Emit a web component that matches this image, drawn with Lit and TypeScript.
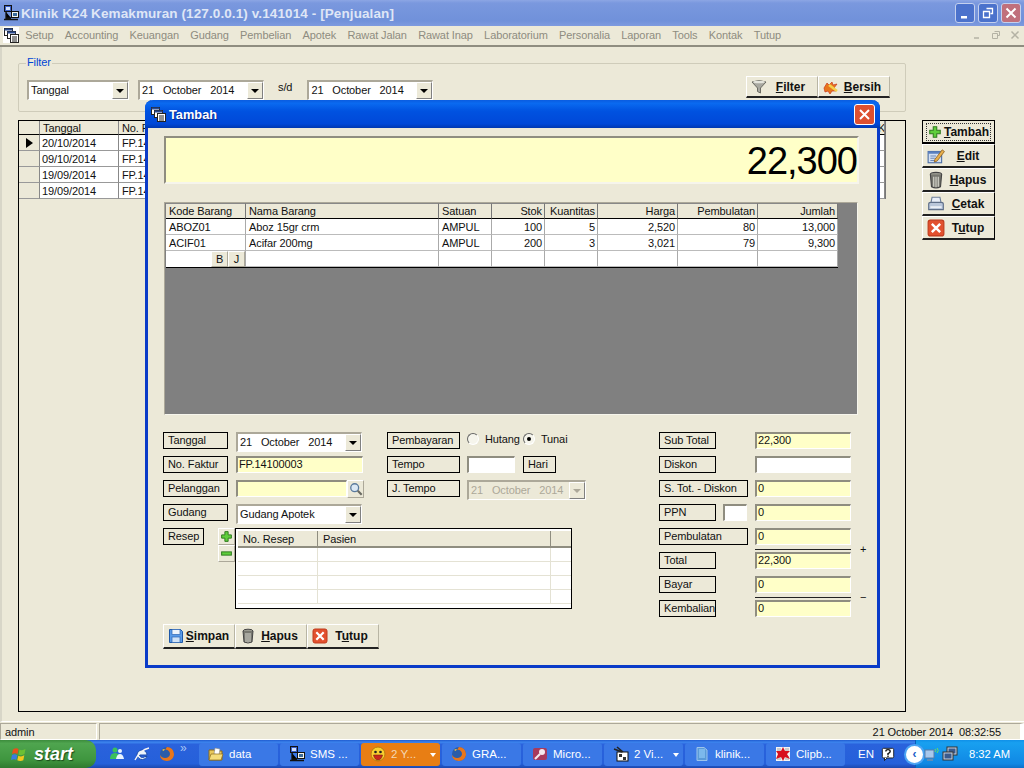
import { LitElement, html, css, svg, TemplateResult } from "lit";
import { customElement } from "lit/decorators.js";

const ic = (w: number, h: number, body: any, vb = "0 0 16 16"): TemplateResult =>
  html`<svg class="ic" width=${w} height=${h} viewBox=${vb}>${body}</svg>`;

const plusBody = svg`<path d="M6 2h4v4h4v4h-4v4H6v-4H2V6h4z" fill="#5fce3c" stroke="#2f7a1f" stroke-width="1.2"/>`;
const minusBody = svg`<rect x="2" y="6" width="12" height="4" fill="#5fce3c" stroke="#2f7a1f" stroke-width="1.2"/>`;
const xBody = svg`<rect x="1" y="1" width="14" height="14" rx="2" fill="#e2502e" stroke="#c03a1c"/><path d="M4.3 4.3l7.4 7.4M11.7 4.3l-7.4 7.4" stroke="#fff" stroke-width="2.2"/>`;
const trashBody = svg`<ellipse cx="8" cy="3" rx="5" ry="1.8" fill="#9a9a90" stroke="#444"/><path d="M3 3l1 11q4 2 8 0l1-11" fill="#77776f" stroke="#444"/><path d="M6 5v9M8 5v9.500M10 5v9" stroke="#d8d8d0" stroke-width="1"/>`;
const printerBody = svg`<path d="M4.500 2h7l1 5h-9z" fill="#e8eef8" stroke="#6d7f9a"/><path d="M1.500 8q0-1.500 2-1.500h9q2 0 2 1.500v5h-13z" fill="#b9c6da" stroke="#5e6e88"/><rect x="3" y="10" width="10" height="1.500" fill="#eef2f8"/>`;
const editBody = svg`<rect x="1" y="4" width="12" height="10" fill="#d4e0f2" stroke="#4d6ea6"/><rect x="1" y="4" width="12" height="2" fill="#5a80c0"/><path d="M3 8h5M3 10h4M3 12h5" stroke="#6d88b8"/><path d="M7 11l6.500-8.500 2 1.500L9 12.500l-2.500.8z" fill="#e8b04c" stroke="#8a5a1c" stroke-width=".7"/>`;
const floppyBody = svg`<path d="M1.500 1.500h11l2 2v11h-13z" fill="#5b9be8" stroke="#1f58a8"/><rect x="4" y="1.500" width="8" height="5" fill="#eef4fc" stroke="#2a64b4" stroke-width=".7"/><rect x="4" y="9" width="8" height="5.500" fill="#cfe2f8" stroke="#2a64b4" stroke-width=".7"/>`;
const funnelBody = svg`<path d="M1 3q7-3 14 0L9.500 9v5l-3-1.500V9z" fill="#a8a8a0" stroke="#6a6a62"/><ellipse cx="8" cy="3" rx="6" ry="1.300" fill="#e4e4dc"/>`;
const broomBody = svg`<path d="M1 9l3-5 2 2 3-3 1 3 4-1-3 4 2 3-4 0-2 3-2-3-3 1z" fill="#e8761c" stroke="#c8381c" stroke-width=".7"/><path d="M6 6l8 6" stroke="#f4d24c" stroke-width="2.400"/>`;
const lensBody = svg`<circle cx="6.500" cy="6.500" r="4.500" fill="#dbe8f4" stroke="#5a7a9c" stroke-width="1.500"/><path d="M10 10l4.500 4.500" stroke="#6a6a62" stroke-width="2.400"/>`;
const mdiBody = svg`<rect x="1.500" y="1.500" width="8" height="7" fill="#fff" stroke="#222"/><rect x="1.500" y="1.500" width="8" height="2" fill="#2a4a90"/><rect x="4.500" y="4.500" width="8" height="7" fill="#fff" stroke="#222"/><rect x="4.500" y="4.500" width="8" height="2" fill="#2a4a90"/><rect x="7.500" y="7.500" width="8" height="8" fill="#fff" stroke="#222"/><path d="M9 10h5M9 12h5M9 14h5" stroke="#222"/>`;
const pcBody = svg`<rect x="1.500" y=".5" width="7" height="6" fill="#3a5ec8" stroke="#111"/><rect x="3" y="2" width="4" height="3" fill="#cfe0ff"/><rect x="8.500" y="6.500" width="7" height="6" fill="#f4f4f0" stroke="#111"/><rect x="10" y="8" width="4" height="3" fill="#3a6a9c"/><path d="M3 7v6h5M1 14.500h14" stroke="#111" stroke-width="1.300"/>`;
const firefoxBody = svg`<circle cx="8" cy="8" r="7" fill="#2a5ca8"/><path d="M8 1a7 7 0 0 1 7 7c0 4-3 7-7 7-4 0-7-3-7-6 1 2 3 3 5 3 3 0 5-2 5-4 0-3-3-5-5-4 1-1 1-2 2-3z" fill="#e8761c"/><path d="M3 4q1-1 3-1-1 1-1 2z" fill="#f4c43c"/>`;
const folderBody = svg`<path d="M1 4h5l1 1h7v9H1z" fill="#e8c85c" stroke="#8a6a1c"/><path d="M7 2l5 1-1 6-5-1z" fill="#fff" stroke="#888" stroke-width=".6"/><path d="M1 14l2-6h12l-2 6z" fill="#f4dc7c" stroke="#8a6a1c" stroke-width=".7"/>`;
const smileBody = svg`<circle cx="8" cy="8" r="7" fill="#f8d030" stroke="#b87a10"/><circle cx="5.500" cy="6" r="1.300" fill="#222"/><circle cx="10.500" cy="6" r="1.300" fill="#222"/><path d="M3.500 9h9q-1 5-4.500 5T3.500 9z" fill="#c8281c" stroke="#7a1c10" stroke-width=".6"/>`;
const keyBody = svg`<rect x="1" y="2" width="14" height="12" rx="2" fill="#a83a5c"/><circle cx="10" cy="6" r="3" fill="#f4e8ec"/><path d="M8 8l-5 5" stroke="#f4e8ec" stroke-width="2.200"/>`;
const videoBody = svg`<rect x="4" y="6" width="11" height="9" fill="#fff" stroke="#111"/><path d="M1 3l8 3M4 1l6 5" stroke="#222" stroke-width="1.600"/><rect x="6" y="8" width="3" height="3" fill="#333"/><rect x="10" y="11" width="3" height="3" fill="#333"/>`;
const noteBody = svg`<path d="M3 1.500h7l3 2.500v10.500H3z" fill="#5a9ad8" stroke="#9cc4ec"/><rect x="5" y="3" width="6" height="9" fill="#7cb8ec"/>`;
const clipBody = svg`<rect x="1" y="1" width="14" height="14" fill="#f4f4f4"/><path d="M2 2h4v4H2zM10 2h4v4h-4zM2 10h4v4H2zM10 10h4v4h-4z" fill="#ccc"/><path d="M8 1l2 4 5 0-3 3 3 5-5-2-2 4-2-4-5 2 2-5-2-3 5 0z" fill="#d8101c"/>`;
const flagBody = svg`<path d="M2 3.500q3-2 5.500-.5L6.500 8Q4 6.500 1 8z" fill="#e8501c"/><path d="M8.500 3.500q2.500 1.500 6-.5l-1 5q-3 2-6 .5z" fill="#6cc034"/><path d="M1 9q3-1.500 5.300.2l-1 4.800Q3 12.500 0 14z" fill="#3a7ce0"/><path d="M7.300 9.800q3 1.500 6-.5l-1 5q-3 1.500-6 0z" fill="#f4c81c"/>`;
const helpBody = svg`<rect x="1.500" y="1.500" width="13" height="11" rx="1.500" fill="#fff" stroke="#111"/><path d="M4 12.500v3l3-3" fill="#fff" stroke="#111"/><path d="M5.500 5q0-2 2.500-2t2.500 2q0 1.500-2.500 2.500V9" fill="none" stroke="#111" stroke-width="1.600"/><rect x="7.200" y="9.800" width="1.600" height="1.600" fill="#111"/>`;
const wifiBody = svg`<rect x="1" y="4" width="9" height="8" fill="#a8c8ec" stroke="#5a7ca8"/><path d="M3 14h6" stroke="#7a8ca8" stroke-width="1.500"/><path d="M11 3q1.500 1.500 0 3M13 2q2.500 2.500 0 5" fill="none" stroke="#6ce05c"/>`;
const netBody = svg`<rect x="5" y="1" width="10" height="8" fill="#c8d4e4" stroke="#333"/><rect x="6.500" y="2.500" width="7" height="5" fill="#3a5a8c"/><rect x="1" y="6" width="10" height="8" fill="#c8d4e4" stroke="#333"/><rect x="2.500" y="7.500" width="7" height="5" fill="#3a5a8c"/>`;
const msnBody = svg`<circle cx="6" cy="4" r="2.500" fill="#3ac05c"/><path d="M1 13q0-6 5-6t5 6z" fill="#3ac05c"/><circle cx="11" cy="5" r="2" fill="#e8f4ff"/><path d="M7 13q1-5 4-5t4 5z" fill="#e8f4ff"/>`;
const ieBody = svg`<path d="M3 9a5 5 0 1 1 10 0H5.500q.5 2.500 3 2.500 1.500 0 2.500-1h2q-1.500 3-4.500 3Q4 13.500 3 9z" fill="#e8f4ff" stroke="#1c4ca8"/><path d="M1 14q5-10 14-12" fill="none" stroke="#f4f4f4" stroke-width="1.300"/>`;

@customElement("app-root")
export class AppRoot extends LitElement {
  static styles = css`
    :host { display: block; width: 1024px; height: 768px; position: relative; overflow: hidden; background: #ece9d8; font: 11px "Liberation Sans", Arial, sans-serif; letter-spacing: -.1px; color: #111; }
    * { box-sizing: border-box; }
    .ic { display: block; flex: none; }
    .app { display: flex; flex-direction: column; height: 768px; }

    .title { height: 26px; flex: none; display: flex; align-items: center; padding: 0 3px 0 3px; background: linear-gradient(#8ca6e4, #7a98de 12%, #7091da 80%, #7d9adf); color: #dfe6f6; font-weight: bold; font-size: 13.5px; letter-spacing: .1px; gap: 2px; }
    .title .text { flex: 1; }
    .wbtn { width: 20px; height: 20px; margin-left: 1px; border-radius: 3px; border: 1px solid #c4d0ee; background: #4b72cc; display: flex; align-items: center; justify-content: center; }
    .wbtn.close { background: #c0707c; }

    .menu { height: 21px; flex: none; display: flex; align-items: center; gap: 11.3px; padding: 0 4px 2px 3px; border-bottom: 2px solid #8f8d80; color: #8e8c80; background: #ece9d8; }
    .menu .mdi { background: #fff; margin-right: -5px; }
    .menu .ctl { margin-left: auto; display: flex; gap: 9px; color: #b4b2a4; font-size: 11px; }

    .main { flex: 1; display: grid; grid-template-columns: 888px 73px; grid-template-rows: auto 1fr; column-gap: 16px; row-gap: 8px; padding: 9px 0 9px 16px; border-left: 2px solid #d8d6c8; border-bottom: 1px solid #fff; min-height: 0; }
    fieldset { grid-column: 1; margin: 0; padding: 10px 8px 0; border: 1px solid #cfccba; border-radius: 2px; height: 56px; min-width: 0; display: block; }
    legend { color: #0046d5; padding: 0 1px; margin-left: -1px; height: 14px; line-height: 13px; font-size: 11px; }
    .frow { display: flex; align-items: flex-start; }
    .sd { margin: 0 15px 0 14px; padding-top: 1px; }
    .fbtns { margin-left: auto; margin-right: 7px; margin-top: -4px; display: flex; }
    .fbtns .tb { width: 72px; height: 22px; }

    .grid-box { grid-column: 1; grid-row: 2; border: 1px solid #000; min-height: 0; overflow: hidden; }
    .bgt { display: grid; grid-template-columns: 21px 79px 759px 7px; width: 867px; border-right: 1px solid #777; }
    .bgt > div { height: 16px; border-right: 1px solid #888; border-bottom: 1px solid #999; background: #fff; padding: 1px 2px; white-space: nowrap; overflow: hidden; line-height: 14px; }
    .bgt > .fp { padding-left: 3px; }
    .bgt > .h { height: 14px; background: #ece9d8; border-bottom-color: #000; padding: 1px 3px 0; line-height: 13px; }
    .bgt > .k { padding-left: 0; padding-right: 0; }
    .bgt > .i { background: #ece9d8; padding: 3px 0 0 7px; }
    .tri { width: 0; height: 0; border-left: 7px solid #000; border-top: 5px solid transparent; border-bottom: 5px solid transparent; }

    .side { grid-column: 2; grid-row: 2; display: flex; flex-direction: column; align-self: start; }
    .side .tb { width: 73px; height: 24px; border-right-color: #000; }
    .side .tb.def { border: 1px solid #000; border-bottom-width: 2px; height: 24px; position: relative; }
    .side .tb:last-child { border-bottom: 2px solid #222; }
    .dots { flex: 1; display: flex; align-items: center; gap: 0; border: 1px dotted #333; height: 18px; padding-left: 1px; margin: 0 -1px; }
    .dots .tt { padding-left: 0; }

    .tb { display: flex; align-items: center; background: #ece9d8; border: 1px solid; border-color: #fff #b8b5a4 #222 #fff; border-bottom-width: 2px; font-weight: bold; font-size: 12px; letter-spacing: 0; color: #111; padding: 0 4px; flex: none; }
    .tb .tt { flex: 1; text-align: center; white-space: nowrap; padding-left: 1px; }

    .status { height: 18px; flex: none; display: flex; padding-top: 1px; background: #ece9d8; }
    .status .a { width: 97px; border: 1px solid; border-color: #aca899 #fff #fff #aca899; padding: 2px 4px; }
    .status .b { flex: 1; margin-left: 2px; border: 1px solid; border-color: #aca899 #fff #fff #aca899; padding: 2px 19px 0 0; text-align: right; white-space: pre; border-right: 4px solid #fff; }

    .task { height: 28px; flex: none; display: flex; align-items: center; color: #fff; letter-spacing: 0; background: linear-gradient(#1f5bd0, #3d85ee 8%, #2a62dc 16%, #2560da 85%, #1c48ae); }
    .start { width: 96px; height: 28px; flex: none; display: flex; align-items: center; gap: 7px; padding-left: 11px; border-radius: 0 10px 10px 0; background: linear-gradient(#3c8c3c, #4fa54f 12%, #3f963f 70%, #2f7a2f); font: italic bold 18px "Liberation Sans", Arial, sans-serif; color: #fff; text-shadow: 1px 1px 1px #1a4a1a; }
    .ql { width: 103px; flex: none; display: flex; align-items: center; gap: 9px; padding-left: 13px; color: #a9c6f6; font-size: 10px; }
    .ql .more { margin: -13px 0 0 -4px; font-size: 12px; }
    .tk { width: 79px; height: 23px; margin-right: 2px; flex: none; border-radius: 3px; background: #3a78e6; display: flex; align-items: center; gap: 5px; padding-left: 9px; white-space: nowrap; font-size: 11.500px; position: relative; }
    .tk.act { background: #e87e14; color: #f4d8b4; }
    .tk .dd { position: absolute; right: 4px; top: 10px; border-top: 4px solid #fff; border-left: 3px solid transparent; border-right: 3px solid transparent; }
    .en { margin-left: 11px; width: 23px; font-size: 11.500px; }
    .tray { flex: 1; height: 28px; display: flex; align-items: center; gap: 2px; background: linear-gradient(#1090e8, #18a0f0 10%, #1088e4 85%, #0c70c8); border-left: 1px solid #0a60b8; margin-left: 20px; }
    .chev { width: 17px; height: 17px; border-radius: 50%; background: #fff; color: #1860c8; display: flex; align-items: center; justify-content: center; font-weight: bold; font-size: 12px; margin: 0 -1px 0 -10px; box-shadow: 0 0 0 2px #4ca4f4; }
    .clock { margin-left: 9px; font-size: 11.200px; white-space: nowrap; }

    .dlg { position: absolute; left: 145px; top: 100px; width: 735px; height: 568px; background: #ece9d8; border: 3px solid #0a3bc8; border-top: 0; border-radius: 8px 8px 0 0; }
    .dtitle { height: 28px; margin: 0 -3px; padding: 0 5px 0 5px; display: flex; align-items: center; gap: 3px; border-radius: 8px 8px 0 0; background: linear-gradient(#0a5ce0, #0a6af0 12%, #0052e0 40%, #0048d8 85%, #0038b0); color: #fff; font-weight: bold; font-size: 12.800px; letter-spacing: 0; text-shadow: 1px 1px 0 #0a2a90; }
    .dtitle .text { flex: 1; }
    .dclose { width: 21px; height: 21px; border: 1px solid #fff; border-radius: 3px; background: #dd5030; display: flex; align-items: center; justify-content: center; }
    .dbody { padding: 8px 0 0 15px; }
    .display { margin-left: 1px; width: 695px; height: 48px; background: #ffffc8; border: 2px solid; border-color: #8f8d80 #f6f5ec #f6f5ec #8f8d80; text-align: right; font-size: 38px; letter-spacing: -1px; line-height: 46px; color: #000; overflow: hidden; }
    .panel { margin: 18px 0 0 1px; width: 694px; height: 213px; background: #808080; border: 1px solid; border-color: #aca899 #f6f5ec #f6f5ec #aca899; padding-left: 1px; }
    .itbl { display: grid; grid-template-columns: 80px 193px 53px 53px 53px 80px 80px 80px; width: 672px; border-bottom: 1px solid #000; }
    .itbl > div { height: 16px; border-right: 1px solid #aaa; border-bottom: 1px solid #bbb; background: #fff; padding: 1px 2px 0 3px; line-height: 14px; white-space: nowrap; overflow: hidden; }
    .itbl > .h { background: #ece9d8; border-top: 1px solid #888; border-right: 1px solid #777; border-bottom: 1px solid #000; padding-top: 0; }
    .itbl > .r { text-align: right; }
    .itbl > .bj { display: flex; justify-content: flex-end; padding: 0; border-bottom: 0; }
    .itbl > .bj span { width: 17px; height: 16px; background: #ece9d8; border: 1px solid; border-color: #fff #aca899 #aca899 #fff; text-align: center; line-height: 14px; }

    .form { display: flex; margin-top: 17px; align-items: flex-start; }
    .col1 { width: 224px; flex: none; }
    .col2 { width: 272px; flex: none; }
    .row { display: flex; height: 24px; align-items: flex-start; }
    .row.res { width: 420px; height: 96px; }
    .lbl { height: 17px; border: 1px solid #000; padding: 0 4px; line-height: 14px; width: 65px; flex: none; white-space: nowrap; }
    .lbl.w41 { width: 41px; margin-right: 14px; }
    .lbl.w73 { width: 73px; }
    .lbl.w57 { width: 57px; }
    .lbl.w89 { width: 89px; }
    .lbl.w33 { width: 33px; margin-left: 8px; }
    .g8 { margin-left: 8px; }
    .g7 { margin-left: 7px; }
    .g39 { width: 39px; flex: none; }
    .g9 { width: 9px; flex: none; }
    .combo { display: flex; height: 20px; background: #fff; border: 1px solid; border-width: 2px 1px 1px 2px; border-color: #aca899 #fff #fff #aca899; width: 126px; flex: none; padding-left: 2px; line-height: 17px; white-space: pre; justify-content: space-between; }
    .combo.w102 { width: 102px; }
    .combo.off { background: #ece9d8; color: #aca899; width: 119px; }
    .arrow { width: 16px; height: 17px; background: #ece9d8; border: 1px solid; border-color: #fff #808080 #808080 #fff; display: flex; align-items: center; justify-content: center; flex: none; }
    .arrow::after { content: ""; border-top: 4px solid #000; border-left: 4px solid transparent; border-right: 4px solid transparent; }
    .off .arrow::after { border-top-color: #aca899; }
    .in { height: 17px; border: 1px solid; border-width: 2px 1px 1px 2px; border-color: #8f8d80 #fff #fff #8f8d80; background: #ffffc8; padding-left: 1px; line-height: 13px; flex: none; white-space: nowrap; }
    .in.white { background: #fff; }
    .w127 { width: 127px; }
    .w111 { width: 111px; }
    .w48 { width: 48px; }
    .w96 { width: 96px; }
    .w24 { width: 24px; }
    .lens { width: 17px; height: 18px; display: flex; align-items: center; justify-content: center; background: #ece9d8; border: 1px solid; border-color: #fff #aca899 #aca899 #fff; }
    .radio { width: 12px; height: 12px; border-radius: 50%; background: #f6f5ec; border: 1px solid; border-color: #666 #fff #fff #666; margin: 1px 6px 0 7px; display: flex; align-items: center; justify-content: center; flex: none; }
    .radio.on { margin-left: 3px; }
    .radio.on::after { content: ""; width: 4px; height: 4px; border-radius: 50%; background: #000; }
    .rtext { line-height: 14px; }
    .sq { width: 17px; height: 17px; display: flex; align-items: center; justify-content: center; background: #ece9d8; border: 1px solid; border-color: #fff #aca899 #aca899 #fff; }
    .pm { display: flex; flex-direction: column; flex: none; width: 17px; }
    .resep { width: 337px; height: 81px; border: 1px solid #000; flex: none; padding: 2px 0 0 2px; background: #fff; overflow: hidden; }
    .rt { display: grid; grid-template-columns: 80px 233px 21px; }
    .rt > div { height: 14px; border-right: 1px solid #e4e2d4; border-bottom: 1px solid #e4e2d4; }
    .rt > .h { height: 17px; background: #ece9d8; border-right: 1px solid #8f8d80; border-bottom: 2px solid #8f8d80; padding: 2px 0 0 5px; }
    .rt > .end { border-right: 0; }
    .bbtns { display: flex; }
    .bbtns .tb { width: 72px; height: 25px; }
    .vwrap { display: flex; flex-direction: column; flex: none; height: 24px; }
    .rule { display: flex; align-items: center; height: 1px; margin-top: 4px; width: 96px; background: #222; }
    .rule span { margin-left: 105px; flex: none; line-height: 1px; }
  `;

  private combo(t: string, cls = "") {
    return html`<div class="combo ${cls}"><span>${t}</span><div class="arrow"></div></div>`;
  }

  private tb(icon: TemplateResult, label: TemplateResult) {
    return html`<div class="tb">${icon}<span class="tt">${label}</span></div>`;
  }

  private field(label: string, lcls: string, value: string, cls = "") {
    return html`<div class="row"><div class="lbl ${lcls}">${label}</div><span class=${lcls === "w89" ? "g7" : "g39"}></span><div class="in w96 ${cls}">${value}</div></div>`;
  }

  render() {
    const date = "21   October   2014";
    const bgRows = ["20/10/2014", "09/10/2014", "19/09/2014", "19/09/2014"];
    const heads = ["Kode Barang", "Nama Barang", "Satuan", "Stok", "Kuantitas", "Harga", "Pembulatan", "Jumlah"];
    const items = [
      ["ABOZ01", "Aboz 15gr crm", "AMPUL", "100", "5", "2,520", "80", "13,000"],
      ["ACIF01", "Acifar 200mg", "AMPUL", "200", "3", "3,021", "79", "9,300"],
    ];
    const tasks: [string, any, boolean, boolean][] = [
      ["data", folderBody, false, false],
      ["SMS ...", pcBody, false, false],
      ["2 Y...", smileBody, true, true],
      ["GRA...", firefoxBody, false, false],
      ["Micro...", keyBody, false, false],
      ["2 Vi...", videoBody, true, false],
      ["klinik...", noteBody, false, false],
      ["Clipb...", clipBody, false, false],
    ];
    return html`
      <div class="app">
        <div class="title">
          ${ic(16, 16, pcBody)}
          <span class="text">Klinik K24 Kemakmuran (127.0.0.1) v.141014 - [Penjualan]</span>
          <div class="wbtn">${ic(12, 12, svg`<rect x="2" y="9" width="6" height="2.500" fill="#fff"/>`, "0 0 12 12")}</div>
          <div class="wbtn">${ic(12, 12, svg`<path d="M4.500 1.500h6v5h-2M1.500 4.500h6v6h-6z" fill="none" stroke="#fff" stroke-width="1.300"/>`, "0 0 12 12")}</div>
          <div class="wbtn close">${ic(12, 12, svg`<path d="M1.500 1.500l9 9M10.500 1.500l-9 9" stroke="#fff" stroke-width="2"/>`, "0 0 12 12")}</div>
        </div>
        <div class="menu">
          <span class="mdi">${ic(16, 16, mdiBody)}</span>
          ${["Setup", "Accounting", "Keuangan", "Gudang", "Pembelian", "Apotek", "Rawat Jalan", "Rawat Inap", "Laboratorium", "Personalia", "Laporan", "Tools", "Kontak", "Tutup"].map((m) => html`<span>${m}</span>`)}
          <span class="ctl">
            ${ic(10, 10, svg`<path d="M2 8h5" stroke="#b4b2a4" stroke-width="1.500"/>`, "0 0 10 10")}
            ${ic(10, 10, svg`<path d="M3.500 1.500h5v4h-2M1.500 3.500h5v5h-5z" fill="none" stroke="#b4b2a4"/>`, "0 0 10 10")}
            ${ic(10, 10, svg`<path d="M1.500 1.500l7 7M8.500 1.500l-7 7" stroke="#b4b2a4" stroke-width="1.500"/>`, "0 0 10 10")}
          </span>
        </div>
        <div class="main">
          <fieldset>
            <legend>Filter</legend>
            <div class="frow">
              ${this.combo("Tanggal", "w102")}
              <span class="g9"></span>
              ${this.combo(date)}
              <span class="sd">s/d</span>
              ${this.combo(date)}
              <div class="fbtns">
                ${this.tb(ic(16, 16, funnelBody), html`<u>F</u>ilter`)}
                ${this.tb(ic(16, 16, broomBody), html`<u>B</u>ersih`)}
              </div>
            </div>
          </fieldset>
          <div class="grid-box">
            <div class="bgt">
              <div class="h"></div><div class="h">Tanggal</div><div class="h">No. Faktur</div><div class="h k">K</div>
              ${bgRows.map((d, i) => html`
                <div class="i">${i === 0 ? html`<div class="tri"></div>` : ""}</div>
                <div>${d}</div><div class="fp">FP.14100001</div><div></div>`)}
            </div>
          </div>
          <div class="side">
            <div class="tb def"><div class="dots">${ic(14, 14, plusBody)}<span class="tt"><u>T</u>ambah</span></div></div>
            ${this.tb(ic(18, 18, editBody), html`<u>E</u>dit`)}
            ${this.tb(ic(18, 18, trashBody), html`<u>H</u>apus`)}
            ${this.tb(ic(18, 18, printerBody), html`<u>C</u>etak`)}
            ${this.tb(ic(18, 18, xBody), html`T<u>u</u>tup`)}
          </div>
        </div>
        <div class="status">
          <div class="a">admin</div>
          <div class="b">21 October 2014  08:32:55</div>
        </div>
        <div class="task">
          <div class="start">${ic(16, 16, flagBody)}<span>start</span></div>
          <div class="ql">
            ${ic(16, 16, msnBody)}${ic(16, 16, ieBody)}${ic(16, 16, firefoxBody)}<span class="more">»</span>
          </div>
          ${tasks.map(([t, b, dd, act]) => html`<div class="tk ${act ? "act" : ""}">${ic(16, 16, b)}<span>${t}</span>${dd ? html`<span class="dd"></span>` : ""}</div>`)}
          <div class="en">EN</div>
          ${ic(14, 16, helpBody)}
          <div class="tray">
            <div class="chev">‹</div>
            ${ic(16, 16, wifiBody)}${ic(16, 16, netBody)}
            <span class="clock">8:32 AM</span>
          </div>
        </div>
      </div>

      <div class="dlg">
        <div class="dtitle">
          ${ic(16, 16, mdiBody)}
          <span class="text">Tambah</span>
          <div class="dclose">${ic(13, 13, svg`<path d="M2 2l9 9M11 2l-9 9" stroke="#fff" stroke-width="2"/>`, "0 0 13 13")}</div>
        </div>
        <div class="dbody">
          <div class="display">22,300</div>
          <div class="panel">
            <div class="itbl">
              ${heads.map((h, i) => html`<div class="h ${i > 2 ? "r" : ""}">${h}</div>`)}
              ${items.map((r) => r.map((c, i) => html`<div class="${i > 2 ? "r" : ""}">${c}</div>`))}
              <div class="bj"><span>B</span><span>J</span></div><div></div><div></div><div></div><div></div><div></div><div></div><div></div>
            </div>
          </div>
          <div class="form">
            <div class="col1">
              <div class="row"><div class="lbl">Tanggal</div><span class="g8"></span>${this.combo(date)}</div>
              <div class="row"><div class="lbl">No. Faktur</div><span class="g8"></span><div class="in w127">FP.14100003</div></div>
              <div class="row"><div class="lbl">Pelanggan</div><span class="g8"></span><div class="in w111"></div><div class="lens">${ic(14, 14, lensBody)}</div></div>
              <div class="row"><div class="lbl">Gudang</div><span class="g8"></span>${this.combo("Gudang Apotek")}</div>
              <div class="row res">
                <div class="lbl w41">Resep</div>
                <div class="pm">
                  <div class="sq">${ic(13, 13, plusBody)}</div>
                  <div class="sq">${ic(13, 13, minusBody)}</div>
                </div>
                <div class="resep">
                  <div class="rt">
                    <div class="h">No. Resep</div><div class="h">Pasien</div><div class="h end"></div>
                    ${[0, 1, 2, 3].map(() => html`<div></div><div></div><div class="end"></div>`)}
                  </div>
                </div>
              </div>
              <div class="bbtns">
                ${this.tb(ic(16, 16, floppyBody), html`<u>S</u>impan`)}
                ${this.tb(ic(16, 16, trashBody), html`<u>H</u>apus`)}
                ${this.tb(ic(16, 16, xBody), html`T<u>u</u>tup`)}
              </div>
            </div>
            <div class="col2">
              <div class="row"><div class="lbl w73">Pembayaran</div><div class="radio"></div><span class="rtext">Hutang</span><div class="radio on"></div><span class="rtext">Tunai</span></div>
              <div class="row"><div class="lbl w73">Tempo</div><span class="g7"></span><div class="in white w48"></div><div class="lbl w33">Hari</div></div>
              <div class="row"><div class="lbl w73">J. Tempo</div><span class="g7"></span>${this.combo(date, "off")}</div>
            </div>
            <div class="col3">
              ${this.field("Sub Total", "w57", "22,300")}
              ${this.field("Diskon", "w57", "", "white")}
              ${this.field("S. Tot. - Diskon", "w89", "0")}
              <div class="row"><div class="lbl w57">PPN</div><span class="g7"></span><div class="in white w24"></div><span class="g8"></span><div class="in w96">0</div></div>
              <div class="row"><div class="lbl w89">Pembulatan</div><span class="g7"></span><div class="vwrap"><div class="in w96">0</div><div class="rule"><span>+</span></div></div></div>
              ${this.field("Total", "w57", "22,300")}
              <div class="row"><div class="lbl w57">Bayar</div><span class="g39"></span><div class="vwrap"><div class="in w96">0</div><div class="rule"><span>−</span></div></div></div>
              ${this.field("Kembalian", "w57", "0")}
            </div>
          </div>
        </div>
      </div>
    `;
  }
}
